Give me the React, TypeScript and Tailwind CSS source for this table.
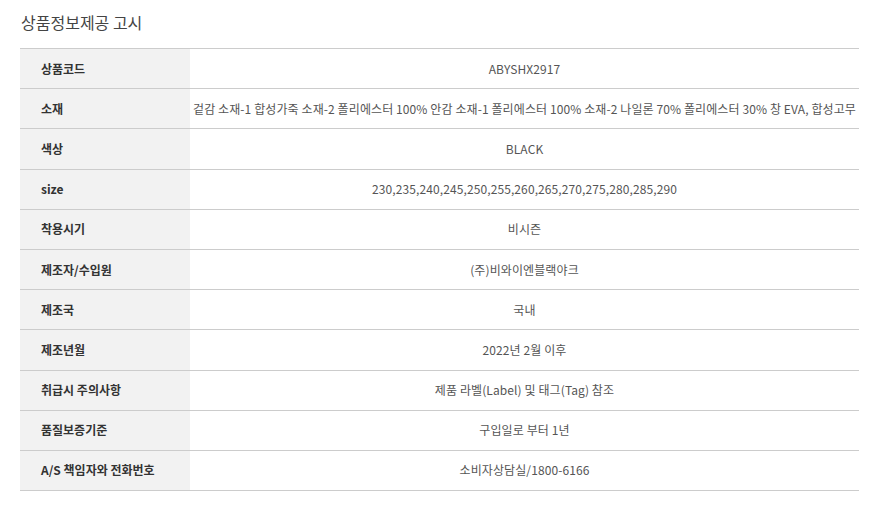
import React from "react";

const rows: [string, string][] = [
  ["상품코드", "ABYSHX2917"],
  [
    "소재",
    "겉감 소재-1 합성가죽 소재-2 폴리에스터 100% 안감 소재-1 폴리에스터 100% 소재-2 나일론 70% 폴리에스터 30% 창 EVA, 합성고무",
  ],
  ["색상", "BLACK"],
  ["size", "230,235,240,245,250,255,260,265,270,275,280,285,290"],
  ["착용시기", "비시즌"],
  ["제조자/수입원", "(주)비와이엔블랙야크"],
  ["제조국", "국내"],
  ["제조년월", "2022년 2월 이후"],
  ["취급시 주의사항", "제품 라벨(Label) 및 태그(Tag) 참조"],
  ["품질보증기준", "구입일로 부터 1년"],
  ["A/S 책임자와 전화번호", "소비자상담실/1800-6166"],
];

export default function App() {
  return (
    <div
      className="w-[870px] h-[509px] bg-white px-5 pt-[11px]"
      style={{ fontFamily: '"Noto Sans CJK KR", "Noto Sans", sans-serif' }}
    >
      <h2 className="text-[16px] leading-[22px] text-[#444] pl-px">상품정보제공 고시</h2>
      <div className="mt-[15px] w-[839px] border-t border-[#ccc]">
        {rows.map(([label, value]) => (
          <div key={label} className="flex h-[40.2px] border-b border-[#ccc] box-border">
            <div className="w-[170px] shrink-0 bg-[#f2f2f2] flex items-center pl-[21px] text-[12px] font-bold text-[#333]">
              {label}
            </div>
            <div className="flex-1 flex items-center justify-center text-[12px] text-[#555] tracking-[0.1px] whitespace-nowrap">
              {value}
            </div>
          </div>
        ))}
      </div>
    </div>
  );
}
